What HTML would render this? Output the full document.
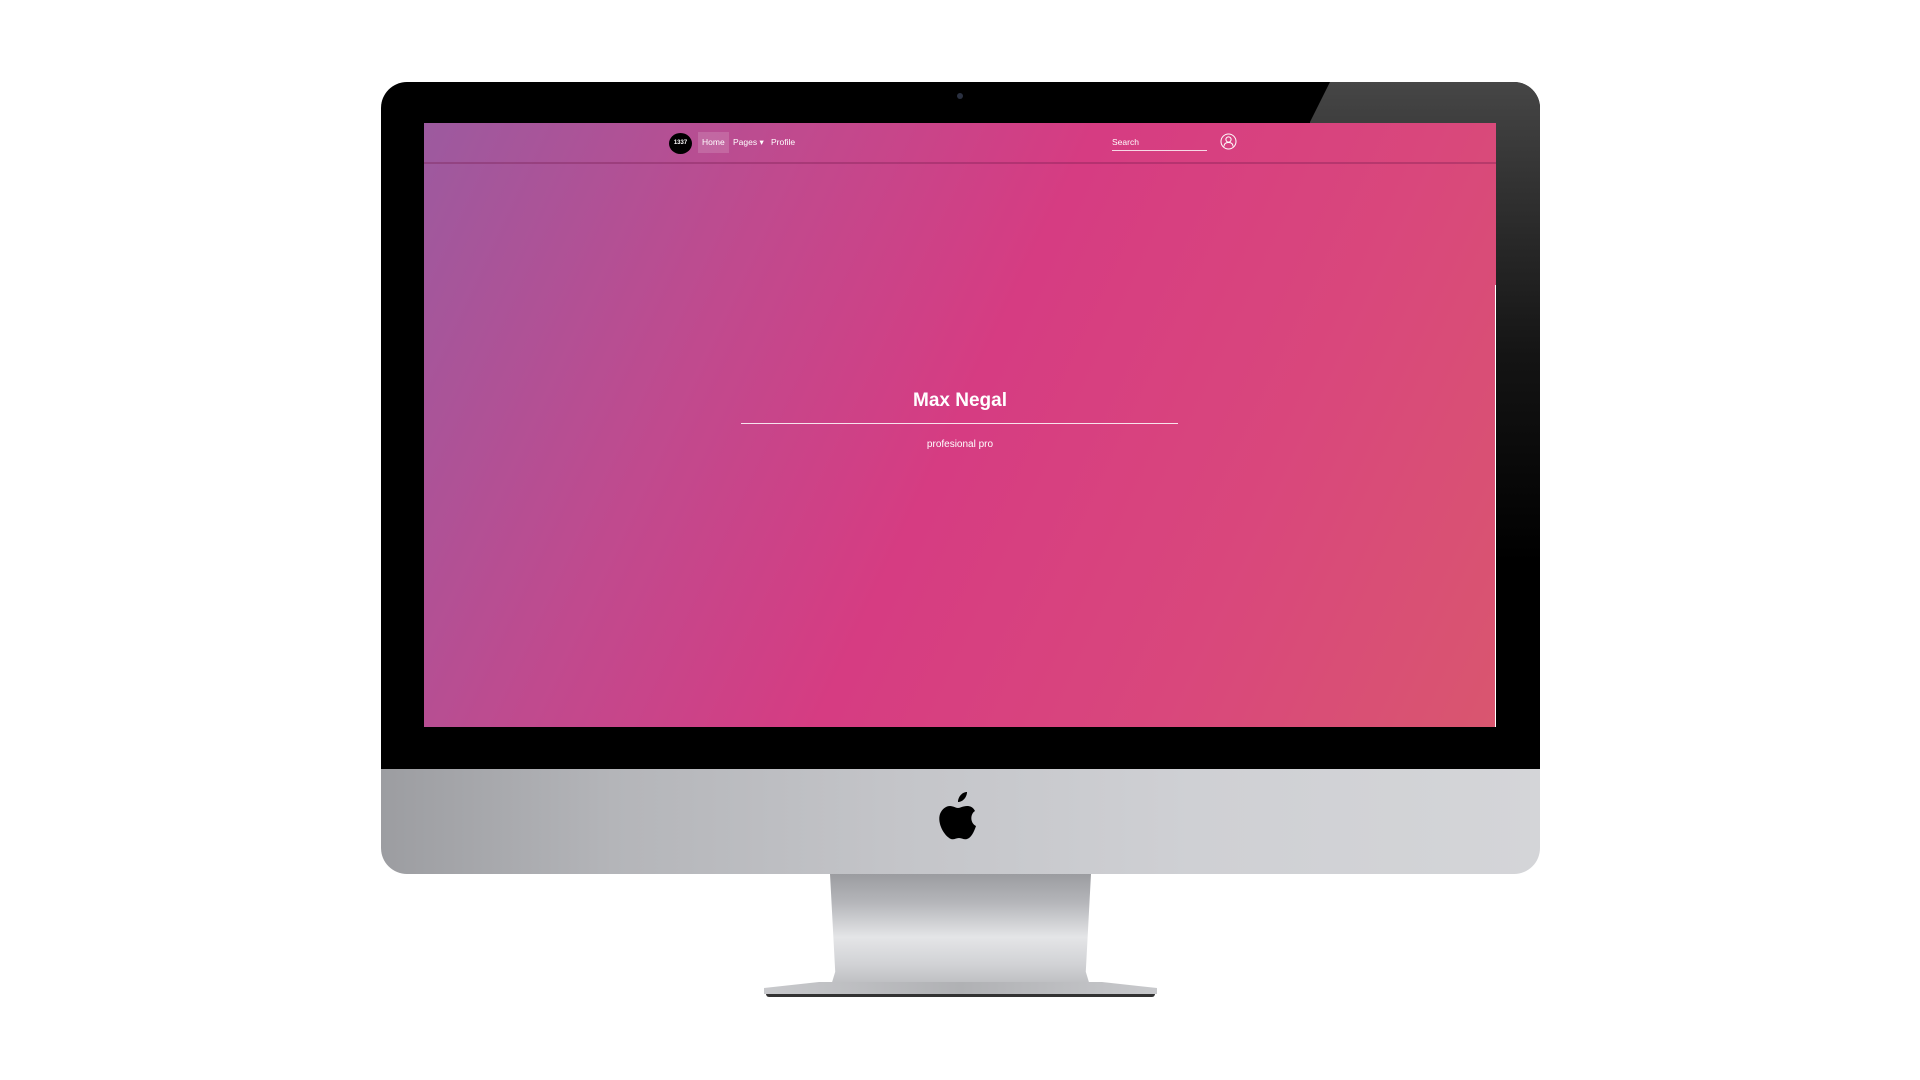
<!DOCTYPE html>
<html><head><meta charset="utf-8"><style>
html,body{margin:0;padding:0;width:1920px;height:1080px;background:#fff;overflow:hidden;font-family:"Liberation Sans",sans-serif}
.abs{position:absolute}
</style></head><body>
<div class="abs" style="left:381px;top:82px;width:1159px;height:687px;background:#000;border-radius:26px 26px 0 0;overflow:hidden">
  <div class="abs" style="left:929px;top:0;width:230px;height:687px;background:linear-gradient(180deg,rgba(70,70,70,1) 0%,rgba(50,50,50,1) 15%,rgba(20,20,20,1) 40%,rgba(0,0,0,1) 70%);clip-path:polygon(20px 0,230px 0,230px 687px,0 687px,0 40px)"></div>
  <div class="abs" style="left:576px;top:11px;width:6px;height:6px;border-radius:50%;background:#2a3040"></div>
</div>
<div class="abs" style="left:424px;top:123px;width:1072px;height:604px;background:linear-gradient(115deg,#9c5a9f 0%,#c04a8e 28%,#d63c82 50%,#d9477c 75%,#d9566f 100%);overflow:hidden">
  <div class="abs" style="left:0;top:39px;width:1072px;height:2px;background:rgba(120,30,80,0.35)"></div>
  <div class="abs" style="left:245px;top:10px;width:23px;height:21px;border-radius:50%;background:#000;color:#fff;font-size:6px;font-weight:bold;text-align:center;line-height:21px">1337</div>
  <div class="abs" style="left:274px;top:9px;width:31px;height:21px;background:rgba(255,255,255,0.15)"></div>
  <div class="abs" style="left:278px;top:14px;font-size:8.5px;color:#fff">Home</div>
  <div class="abs" style="left:309px;top:14px;font-size:8.5px;color:#fff">Pages ▾</div>
  <div class="abs" style="left:347px;top:14px;font-size:8.5px;color:#fff">Profile</div>
  <div class="abs" style="left:688px;top:14px;font-size:8.5px;color:#fff">Search</div>
  <div class="abs" style="left:688px;top:27px;width:95px;height:1px;background:rgba(255,255,255,0.8)"></div>
  <svg class="abs" style="left:796px;top:10px" width="17" height="17" viewBox="0 0 17 17" fill="none" stroke="#fff" stroke-width="1"><circle cx="8.5" cy="8.5" r="7.5"/><circle cx="8.5" cy="6.5" r="2.6"/><path d="M4 13.5c0-3 2-4 4.5-4s4.5 1 4.5 4"/></svg>
  <div class="abs" style="left:0;top:267px;width:1072px;text-align:center;font-size:19px;font-weight:bold;color:#fff">Max Negal</div>
  <div class="abs" style="left:317px;top:300px;width:437px;height:1px;background:rgba(255,255,255,0.85)"></div>
  <div class="abs" style="left:0;top:316px;width:1072px;text-align:center;font-size:10px;color:#fff">profesional pro</div>
  <div class="abs" style="left:1071px;top:162px;width:1px;height:442px;background:#fff"></div>
</div>
<div class="abs" style="left:381px;top:769px;width:1159px;height:105px;background:linear-gradient(90deg,#9c9da1 0%,#b4b5b9 20%,#c4c5c9 45%,#cfd0d4 70%,#d4d5d8 100%);border-radius:0 0 26px 26px"></div>
<svg class="abs" style="left:937px;top:792px" width="46" height="56" viewBox="0 0 46 56"><path fill="#000" d="M30 0c0 5-4 10-9 10 0-5 4-10 9-10zM38 19c-5 3-5 12 1 15-2 6-5 12-9 13-3 1-5-1-8-1s-5 2-8 1C7 44 0 31 3 22c2-5 6-8 10-8 3 0 6 2 8 2s5-2 9-2c3 0 6 1 8 5z"/></svg>
<div class="abs" style="left:830px;top:874px;width:261px;height:115px;background:linear-gradient(180deg,#9b9ca0 0%,#b5b6ba 25%,#e4e5e7 55%,#d0d1d4 80%,#b8b9bc 100%);clip-path:polygon(0 0,100% 0,98% 85%,100% 100%,0 100%,2% 85%)"></div>
<div class="abs" style="left:764px;top:982px;width:393px;height:12px;background:linear-gradient(90deg,#c8c9cc,#b0b1b4 50%,#c8c9cc);clip-path:polygon(14% 0,86% 0,100% 50%,100% 100%,0 100%,0 50%)"></div>
<div class="abs" style="left:766px;top:994px;width:389px;height:3px;background:#333;border-radius:0 0 3px 3px"></div>
</body></html>
